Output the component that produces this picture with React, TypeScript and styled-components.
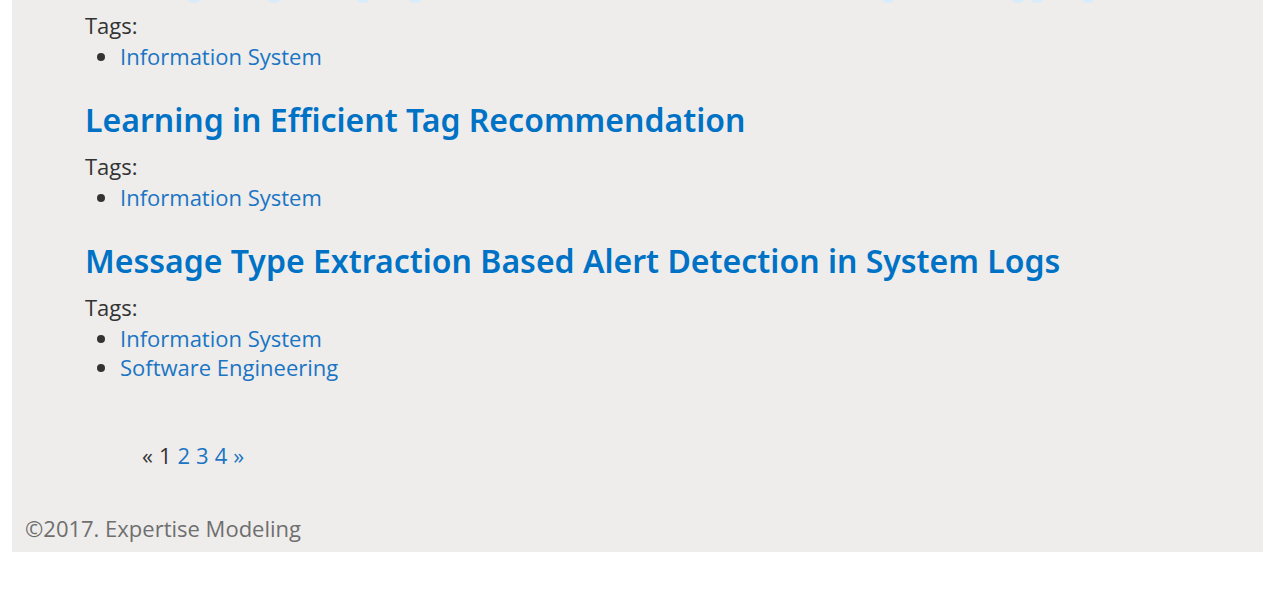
import React from "react";
import styled, { createGlobalStyle } from "styled-components";

const GlobalStyle = createGlobalStyle`
  * { box-sizing: border-box; }
  body { margin: 0; background: #fff; }
`;

const Page = styled.div`
  margin: 0 11px 0 12px;
  background: #eeedeb;
  color: #333;
  font-family: "Segoe UI", "Open Sans", "Noto Sans", sans-serif;
  font-size: 22px;
  font-variant-ligatures: none;
  line-height: 29px;
  overflow: hidden;
`;

const Results = styled.main`
  padding: 0 73px;
`;

const Edge = styled.svg`
  display: block;
  width: 1040px;
  height: 11px;
  fill: #d9ecfa;
`;

const Entry = styled.article`
  margin-bottom: 28px;
`;

const Title = styled.h2`
  margin: 0 0 11px;
  font-family: "Segoe UI", "Noto Sans", "Open Sans", sans-serif;
  font-size: 32px;
  font-weight: 600;
  line-height: 42px;
`;

const Link = styled.a`
  color: #0072c6;
  text-decoration: none;
`;

const TagLink = styled(Link)`
  color: #1a75c4;
`;

const Label = styled.p`
  margin: 0 0 2px;
`;

const TagList = styled.ul`
  margin: 0;
  padding: 0 0 0 35px;
`;

const Pager = styled.nav`
  display: flex;
  gap: 6px;
  padding: 31px 0 0 57px;
`;

const Footer = styled.footer`
  padding: 44px 13px 9px;
  color: #6f6f6f;
`;

function Tags({ tags }: { tags: string[] }) {
  return (
    <>
      <Label>Tags:</Label>
      <TagList>
        {tags.map((tag) => (
          <li key={tag}>
            <TagLink href="#">{tag}</TagLink>
          </li>
        ))}
      </TagList>
    </>
  );
}

const entries = [
  { title: "Learning in Efficient Tag Recommendation", tags: ["Information System"] },
  {
    title: "Message Type Extraction Based Alert Detection in System Logs",
    tags: ["Information System", "Software Engineering"],
  },
];

const descenders = [109, 189, 278, 330, 803, 933, 952, 1003];

export default function App() {
  return (
    <>
      <GlobalStyle />
      <Page>
        <Results>
          <Edge viewBox="0 0 1040 11" aria-hidden="true">
            {descenders.map((x) => (
              <ellipse key={x} cx={x} cy={0} rx={6} ry={3} />
            ))}
          </Edge>
          <Entry>
            <Tags tags={["Information System"]} />
          </Entry>
          {entries.map((entry) => (
            <Entry key={entry.title}>
              <Title>
                <Link href="#">{entry.title}</Link>
              </Title>
              <Tags tags={entry.tags} />
            </Entry>
          ))}
          <Pager aria-label="Pages">
            <span>«</span>
            <span aria-current="page">1</span>
            <TagLink href="#">2</TagLink>
            <TagLink href="#">3</TagLink>
            <TagLink href="#">4</TagLink>
            <TagLink href="#">»</TagLink>
          </Pager>
        </Results>
        <Footer>©2017. Expertise Modeling</Footer>
      </Page>
    </>
  );
}
